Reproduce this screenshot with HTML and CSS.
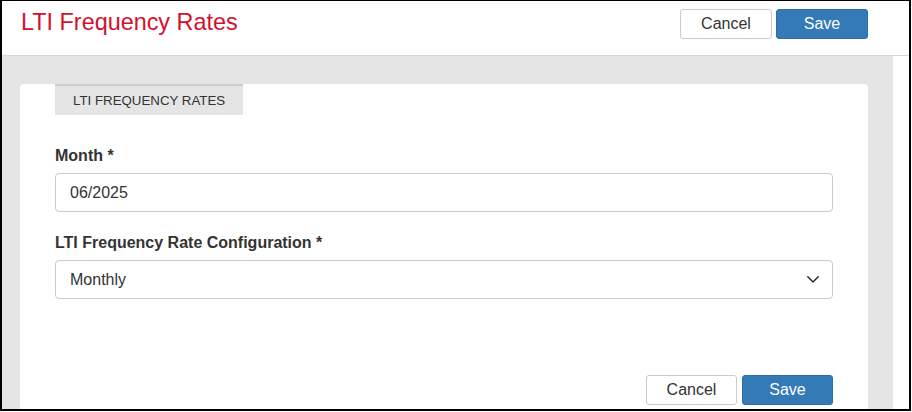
FILE: index.html
```html
<!DOCTYPE html>
<html lang="en">
<head>
<meta charset="utf-8">
<title>LTI Frequency Rates</title>
<link rel="stylesheet" href="styles.css">
</head>
<body>
<div class="frame">
  <header class="topbar">
    <h1 class="title">LTI Frequency Rates</h1>
    <div class="actions">
      <button class="btn btn-default btn-top">Cancel</button>
      <button class="btn btn-primary btn-top">Save</button>
    </div>
  </header>
  <div class="main">
    <div class="panel">
      <section class="card">
        <div class="tab">LTI FREQUENCY RATES</div>
        <div class="field field-first">
          <label class="label" for="month">Month *</label>
          <input class="control" id="month" type="text" value="06/2025">
        </div>
        <div class="field">
          <label class="label" for="config">LTI Frequency Rate Configuration *</label>
          <div class="select-wrap">
            <select class="control select" id="config">
              <option>Monthly</option>
            </select>
            <svg class="chevron" width="12" height="7" viewBox="0 0 12 7" aria-hidden="true">
              <path d="M0.8 0.8 L6 5.9 L11.2 0.8" fill="none" stroke="#222" stroke-width="1.4" stroke-linecap="round" stroke-linejoin="round"/>
            </svg>
          </div>
        </div>
        <div class="footer">
          <button class="btn btn-default btn-bottom">Cancel</button>
          <button class="btn btn-primary btn-bottom">Save</button>
        </div>
      </section>
    </div>
    <div class="gutter"></div>
  </div>
</div>
</body>
</html>
```

FILE: styles.css
```css
html, body {
  margin: 0;
  padding: 0;
  background: #ffffff;
}

body {
  font-family: "Liberation Sans", Arial, Helvetica, sans-serif;
  color: #333333;
}

.frame {
  width: 911px;
  height: 411px;
  box-sizing: border-box;
  border: 2px solid #000000;
  border-top-width: 1px;
  display: flex;
  flex-direction: column;
  overflow: hidden;
  background: #ffffff;
}

.topbar {
  flex: 0 0 55px;
  box-sizing: border-box;
  border-bottom: 1px solid #d8d8d8;
  display: flex;
  justify-content: space-between;
  align-items: flex-start;
  padding: 8px 41px 0 19px;
  background: #ffffff;
}

.title {
  margin: 0;
  font-size: 23.4px;
  font-weight: normal;
  line-height: 26px;
  color: #d3112e;
}

.actions {
  display: flex;
  gap: 4px;
}

.btn {
  box-sizing: border-box;
  font-family: inherit;
  font-size: 16px;
  border-radius: 3px;
  padding: 0;
  cursor: pointer;
}

.btn-top {
  width: 92px;
  height: 30px;
}

.btn-bottom {
  width: 91px;
  height: 30px;
}

.btn-default {
  background: #ffffff;
  border: 1px solid #cccccc;
  color: #333333;
}

.btn-primary {
  background: #337ab7;
  border: 1px solid #2e6da4;
  color: #ffffff;
}

.main {
  flex: 1;
  display: flex;
  min-height: 0;
}

.panel {
  flex: 1;
  background: #e5e5e5;
  padding: 30px 25px 0 18px;
  overflow: hidden;
}

.gutter {
  flex: 0 0 16px;
  background: #ffffff;
}

.card {
  background: #ffffff;
  border-radius: 4px;
  padding: 0 35px 60px;
  min-height: 400px;
}

.tab {
  width: fit-content;
  margin-top: -2px;
  height: 31px;
  box-sizing: border-box;
  border-top: 2px solid #cdcdcd;
  background: #e5e5e5;
  padding: 1px 18px 0;
  font-size: 13.3px;
  line-height: 28px;
  color: #333333;
}

.field {
  margin-top: 20px;
}

.field-first {
  margin-top: 30px;
}

.label {
  display: block;
  font-size: 16px;
  font-weight: bold;
  line-height: 22px;
  margin-bottom: 6px;
  color: #333333;
}

.control {
  display: block;
  width: 100%;
  height: 39px;
  box-sizing: border-box;
  border: 1px solid #cccccc;
  border-radius: 4px;
  padding: 0 14px;
  font-family: inherit;
  font-size: 16px;
  color: #333333;
  background: #ffffff;
  outline: none;
}

.select-wrap {
  position: relative;
}

.select {
  appearance: none;
  -webkit-appearance: none;
}

.chevron {
  position: absolute;
  right: 14px;
  top: 16px;
  pointer-events: none;
}

.footer {
  display: flex;
  justify-content: flex-end;
  gap: 5px;
  margin-top: 76px;
}
```
